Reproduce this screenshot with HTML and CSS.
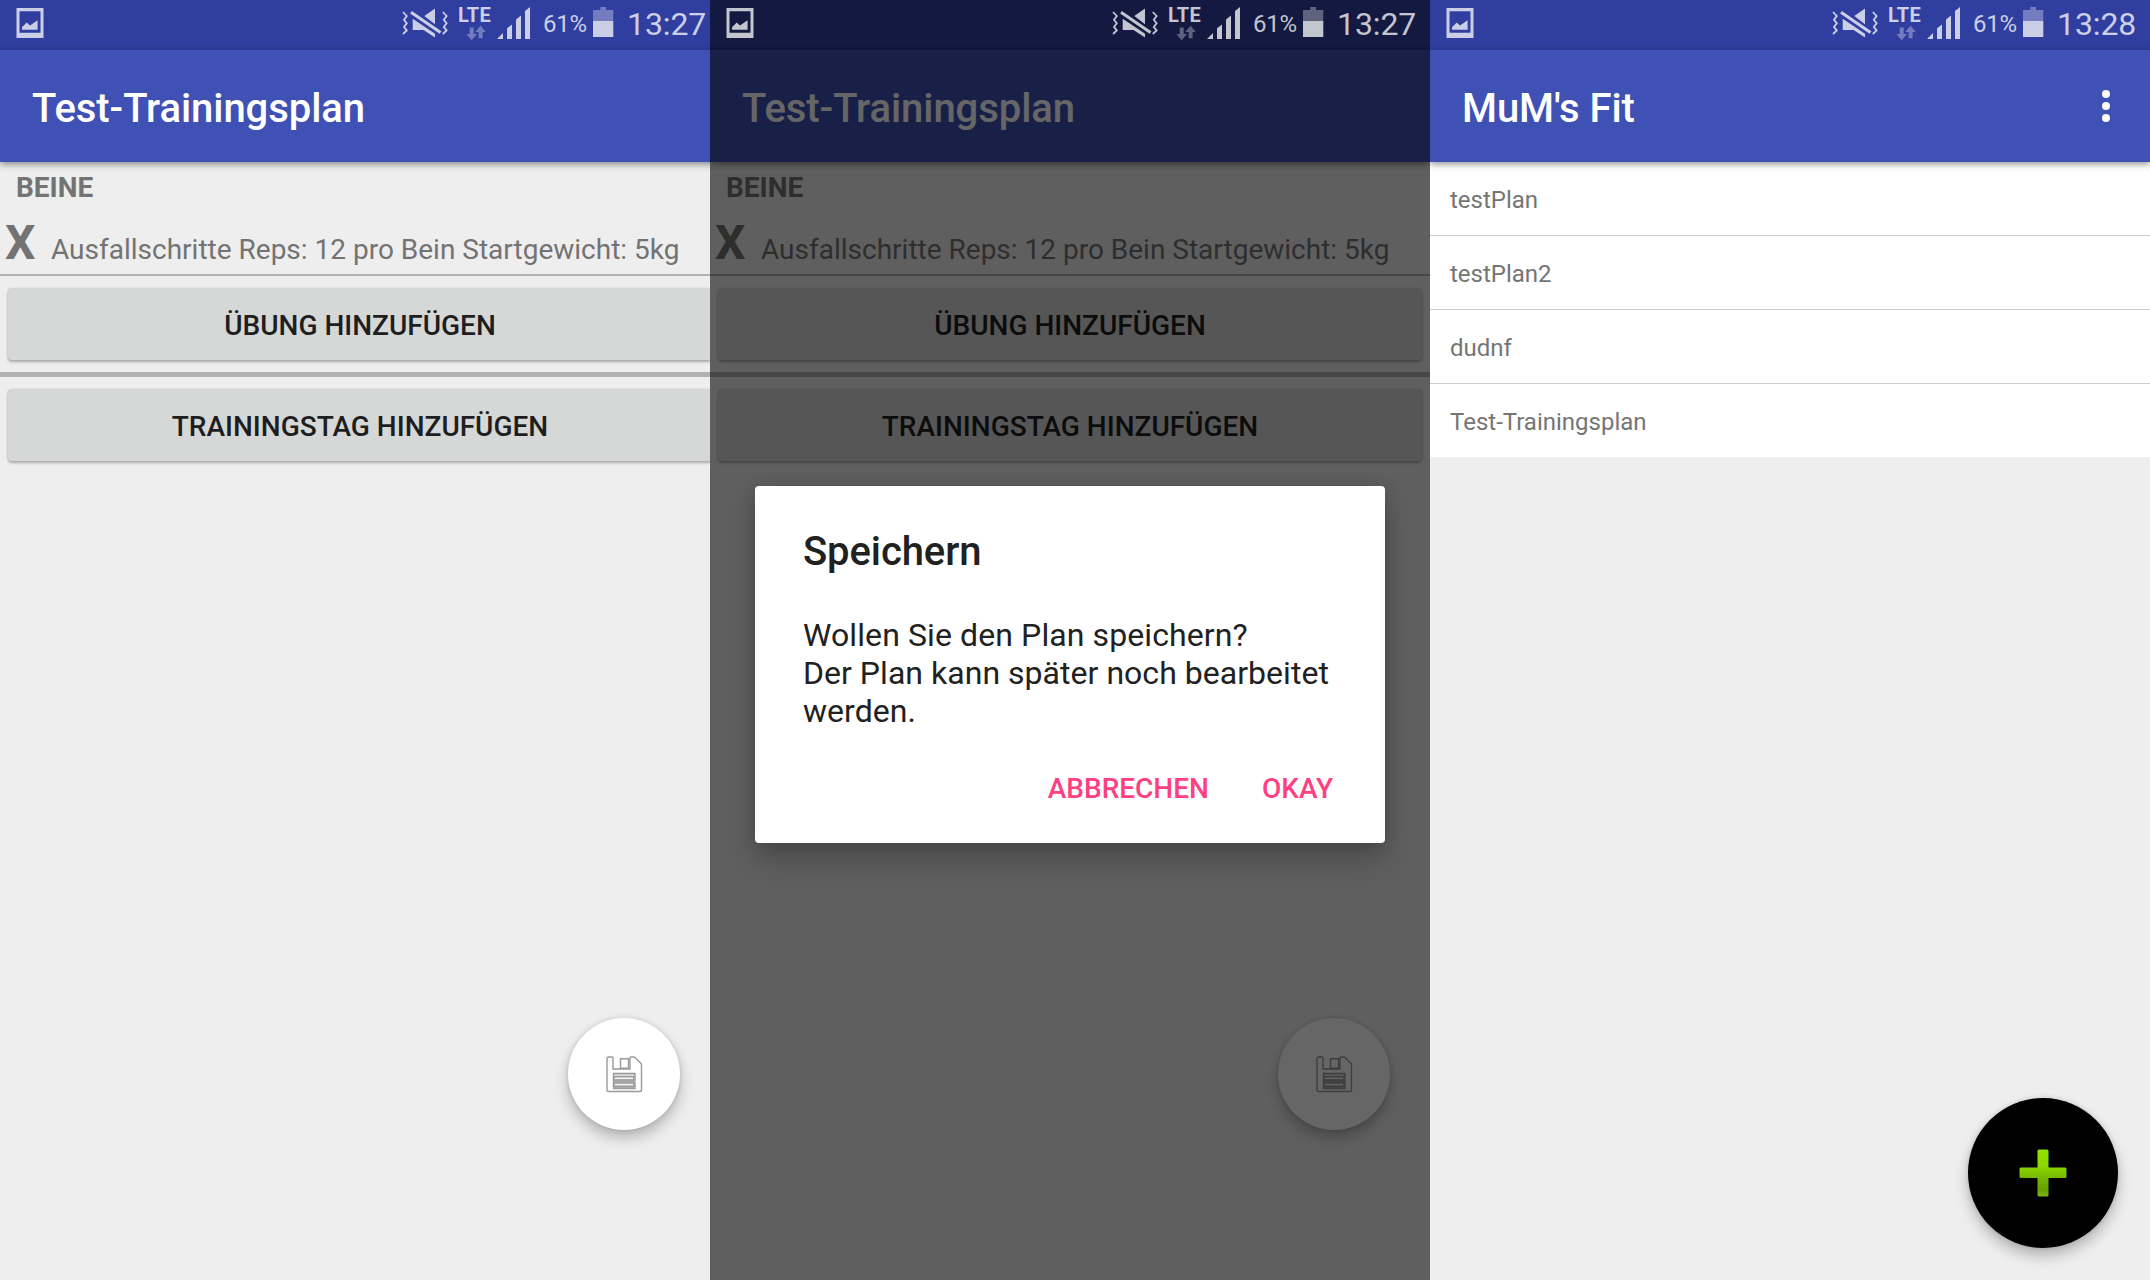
FILE: index.html
```html
<!DOCTYPE html>
<html lang="de">
<head>
<meta charset="utf-8">
<title>MuM's Fit</title>
<link rel="stylesheet" href="styles.css">
</head>
<body>
<svg class="sprite" aria-hidden="true">
  <symbol id="i-picture" viewBox="16 0 28 50">
    <path fill-rule="evenodd" d="M16.500 8h27v30h-27zM19.500 11.300v21.400h21V11.300z"/>
    <path d="M22 29.800v-2.600l4.700-4.700 3.300 3 7.600-5.300v9.600z"/>
  </symbol>
  <symbol id="i-mute" viewBox="402 0 46 50">
    <path class="line" d="M403 12l3.800 4-2.800 3.700 2.800 3.600-2.800 3.600 2.800 3.600-3.800 3.500M442.800 12l3.800 4-2.800 3.700 2.800 3.600-2.800 3.600 2.800 3.600-3.800 3.500"/>
    <path d="M424.300 16L435 8.400V24.200zM412.700 18.700L429.500 30 435 33.800V37.500L423.500 30H412.700z"/>
    <path class="slash" d="M411 12.200L440.500 32.600"/>
  </symbol>
  <symbol id="i-arrows" viewBox="466 0 20 50">
    <path class="faint" d="M469.700 27.500h4V34h3.300l-5.300 6.300L466.300 34h3.400zM480.600 25.800l5.200 6.200h-3.200v6.300h-4V32h-3.300z"/>
  </symbol>
  <symbol id="i-signal" viewBox="497 0 33 50">
    <path d="M497 39l6-6v6zM507 39V28.300l5-3.800V39zM516 39V19.500l5-4V39zM525 39V11l5-4V39z"/>
  </symbol>
  <symbol id="i-battery" viewBox="593 0 21 50">
    <path class="faint" d="M593 21V10h7.300V7h5.700v3h7.300v11z"/>
    <path d="M593 21h20.300v16H593z"/>
  </symbol>
  <symbol id="i-save" viewBox="0 0 38 38">
    <g fill="none" stroke="#999" stroke-width="1.400">
      <path d="M2.500 1h3.500q1 0 1 1v11h17V2q0-1 1-1h2.500q1 0 1.800.8l5.400 5.400q.8.8.8 1.800V34q0 1.500-1.500 1.500H2.500Q1 35.500 1 34V2.500Q1 1 2.500 1z"/>
      <path d="M14.500 2.700h8v9.600h-8z"/>
      <path fill="#dcdedc" d="M7.500 17.500h21.500v15H7.500z"/>
    </g>
    <path fill="#aaa" d="M8 20.300h20.500v12H8z"/>
    <path fill="#f4f4f4" d="M9 21.600h18v1.700H9zM9 27.800h18v1.700H9z"/>
    <path fill="none" stroke="#999" d="M8.500 20.500h19v3.500h-19M8.500 26.800h19v3.500h-19"/>
  </symbol>
</svg>

<main class="screens">
  <section class="screen screen-edit">
    <header class="status">
      <svg class="s-picture"><use href="#i-picture"/></svg>
      <svg class="s-mute"><use href="#i-mute"/></svg>
      <div class="network"><span>LTE</span><svg><use href="#i-arrows"/></svg></div>
      <svg class="s-signal"><use href="#i-signal"/></svg>
      <span class="percent">61%</span>
      <svg class="s-battery"><use href="#i-battery"/></svg>
      <span class="clock">13:27</span>
    </header>
    <div class="appbar"><h1>Test-Trainingsplan</h1></div>
    <div class="plan">
      <h2 class="day">BEINE</h2>
      <div class="exercise"><b class="remove">X</b><span>Ausfallschritte Reps: 12 pro Bein Startgewicht: 5kg</span></div>
      <button class="wide">ÜBUNG HINZUFÜGEN</button>
      <div class="rule"></div>
      <button class="wide">TRAININGSTAG HINZUFÜGEN</button>
    </div>
    <div class="fab fab-save"><svg><use href="#i-save"/></svg></div>
  </section>

  <section class="screen screen-dialog">
    <header class="status">
      <svg class="s-picture"><use href="#i-picture"/></svg>
      <svg class="s-mute"><use href="#i-mute"/></svg>
      <div class="network"><span>LTE</span><svg><use href="#i-arrows"/></svg></div>
      <svg class="s-signal"><use href="#i-signal"/></svg>
      <span class="percent">61%</span>
      <svg class="s-battery"><use href="#i-battery"/></svg>
      <span class="clock">13:27</span>
    </header>
    <div class="appbar"><h1>Test-Trainingsplan</h1></div>
    <div class="plan">
      <h2 class="day">BEINE</h2>
      <div class="exercise"><b class="remove">X</b><span>Ausfallschritte Reps: 12 pro Bein Startgewicht: 5kg</span></div>
      <button class="wide">ÜBUNG HINZUFÜGEN</button>
      <div class="rule"></div>
      <button class="wide">TRAININGSTAG HINZUFÜGEN</button>
    </div>
    <div class="fab fab-save"><svg><use href="#i-save"/></svg></div>
    <div class="scrim"></div>
    <div class="dialog">
      <h2>Speichern</h2>
      <p><span class="question">Wollen Sie den Plan speichern?</span><br>Der Plan kann später noch bearbeitet werden.</p>
      <div class="actions"><span>ABBRECHEN</span><span>OKAY</span></div>
    </div>
  </section>

  <section class="screen">
    <header class="status">
      <svg class="s-picture"><use href="#i-picture"/></svg>
      <svg class="s-mute"><use href="#i-mute"/></svg>
      <div class="network"><span>LTE</span><svg><use href="#i-arrows"/></svg></div>
      <svg class="s-signal"><use href="#i-signal"/></svg>
      <span class="percent">61%</span>
      <svg class="s-battery"><use href="#i-battery"/></svg>
      <span class="clock">13:28</span>
    </header>
    <div class="appbar">
      <h1>MuM's Fit</h1>
      <svg class="more" viewBox="0 0 8 32"><circle cx="4" cy="4" r="4"/><circle cx="4" cy="16" r="4"/><circle cx="4" cy="28" r="4"/></svg>
    </div>
    <ul class="plans">
      <li>testPlan</li>
      <li>testPlan2</li>
      <li>dudnf</li>
      <li>Test-Trainingsplan</li>
    </ul>
    <div class="fab fab-add">
      <svg viewBox="0 0 48 48">
        <defs><linearGradient id="green" x1="0" y1="0" x2="0" y2="1"><stop offset="0" stop-color="#94e000"/><stop offset=".35" stop-color="#8cd800"/><stop offset=".6" stop-color="#78b802"/><stop offset=".85" stop-color="#66a000"/><stop offset="1" stop-color="#7cb414"/></linearGradient></defs>
        <path fill="url(#green)" d="M20 .5h8q1.500 0 1.500 1.500v16.500H46q1.500 0 1.500 1.500v7.500q0 1.500-1.500 1.500H29.500V46q0 1.500-1.500 1.500h-8q-1.500 0-1.500-1.500V29H2Q.5 29 .5 27.500V20q0-1.500 1.500-1.500h16.500V2Q18.500.5 20 .5z"/>
      </svg>
    </div>
  </section>
</main>
</body>
</html>
```

FILE: styles.css
```css
* { box-sizing: border-box; }
body { margin: 0; font-family: Roboto, "Liberation Sans", sans-serif; }
h1, h2, p, ul { margin: 0; padding: 0; font-weight: 400; }
.sprite { position: absolute; width: 0; height: 0; }

.screens { display: flex; width: 2150px; height: 1280px; overflow: hidden; }
.screen { position: relative; width: 720px; flex: none; height: 1280px; background: #eee; overflow: hidden; }
/* the first screen is overlapped by the second */
.screen-edit { margin-right: -10px; }

.status { display: flex; height: 50px; padding-left: 16px; background: #303f9f; color: rgba(255, 255, 255, .75); }
.status svg { height: 50px; flex: none; fill: rgba(255, 255, 255, .75); }
.status .s-picture { width: 28px; margin-right: 358px; }
.status .s-mute { width: 46px; margin-right: 10px; }
.network { display: grid; width: 34px; height: 50px; margin-right: 5px; }
.network > * { grid-area: 1 / 1; }
.network span { font-size: 20px; font-weight: 700; line-height: 31px; letter-spacing: .2px; }
.network svg { width: 20px; margin-left: 8px; }
.status .s-signal { width: 33px; }
.status .s-battery { width: 21px; }
.line { fill: none; stroke: rgba(255, 255, 255, .75); stroke-width: 1.8; }
.slash { stroke: rgba(255, 255, 255, .75); stroke-width: 3; }
.faint { fill: rgba(255, 255, 255, .32); }
.percent { width: 63px; padding-left: 13px; font-size: 24px; line-height: 48px; letter-spacing: -.3px; }
.clock { padding-left: 13px; font-size: 32px; line-height: 48px; letter-spacing: -.1px; white-space: nowrap; }

.appbar { position: relative; display: flex; justify-content: space-between; height: 112px; padding: 0 40px 0 32px; background: #3f51b5; color: #fff; box-shadow: 0 2px 7px rgba(0, 0, 0, .45); }
.appbar h1 { font-size: 40px; font-weight: 500; line-height: 118px; letter-spacing: -.06px; }
.more { width: 8px; height: 32px; margin-top: 40px; fill: #fff; }

.plan { display: flex; flex-direction: column; color: #737373; font-size: 28px; }
.day { padding: 9px 16px 0; font-size: 28px; font-weight: 700; line-height: 33px; }
.exercise { display: flex; align-items: baseline; height: 61px; margin-top: 11px; border-bottom: 2px solid #b0b0b0; line-height: 56px; white-space: nowrap; }
.remove { width: 51px; padding-left: 5px; font-size: 48px; }
.wide { height: 72px; margin: 12px 8px; padding: 3px 0 0; border: 0; border-radius: 4px; background: #d6d7d7; box-shadow: 0 2px 3px rgba(0, 0, 0, .28), 0 0 2px rgba(0, 0, 0, .12); color: #1e1e1e; font: 500 28px Roboto, sans-serif; }
.rule { height: 5px; background: #b2b2b2; }

.fab { position: absolute; display: flex; align-items: center; justify-content: center; border-radius: 50%; }
.fab-save { left: 568px; top: 1018px; width: 112px; height: 112px; background: #fff; box-shadow: 0 8px 14px rgba(0, 0, 0, .24), 0 0 5px rgba(0, 0, 0, .12); }
.fab-save svg { width: 38px; height: 38px; margin: 1px 0 0 1px; }
.fab-add { left: 538px; top: 1098px; width: 150px; height: 150px; background: #000; box-shadow: 0 8px 14px rgba(0, 0, 0, .24), 0 0 5px rgba(0, 0, 0, .12); }
.fab-add svg { width: 48px; height: 48px; }

.screen-dialog .status { background: #131940; }
.scrim { position: absolute; inset: 50px 0 0; background: rgba(0, 0, 0, .6); }
.dialog { position: absolute; left: 45px; top: 486px; width: 630px; height: 357px; padding: 40px 48px 0; border-radius: 4px; background: #fff; box-shadow: 0 16px 28px rgba(0, 0, 0, .22), 0 0 16px rgba(0, 0, 0, .12); color: #212121; }
.dialog h2 { font-size: 40px; font-weight: 500; line-height: 52px; letter-spacing: -.1px; }
.dialog p { margin-top: 38px; font-size: 32px; line-height: 38px; letter-spacing: .03px; }
.dialog .question { letter-spacing: .1px; }
.actions { display: flex; justify-content: flex-end; gap: 53px; margin: 41px 4px 0 0; color: #ff4081; font-size: 28px; font-weight: 500; line-height: 36px; }

.plans { list-style: none; background: #fff; }
.plans li { height: 74px; padding: 1px 0 0 20px; border-bottom: 1px solid #ccc; color: #757575; font-size: 24px; line-height: 74px; }
.plans li:last-child { border-bottom: 0; height: 73px; }
```
